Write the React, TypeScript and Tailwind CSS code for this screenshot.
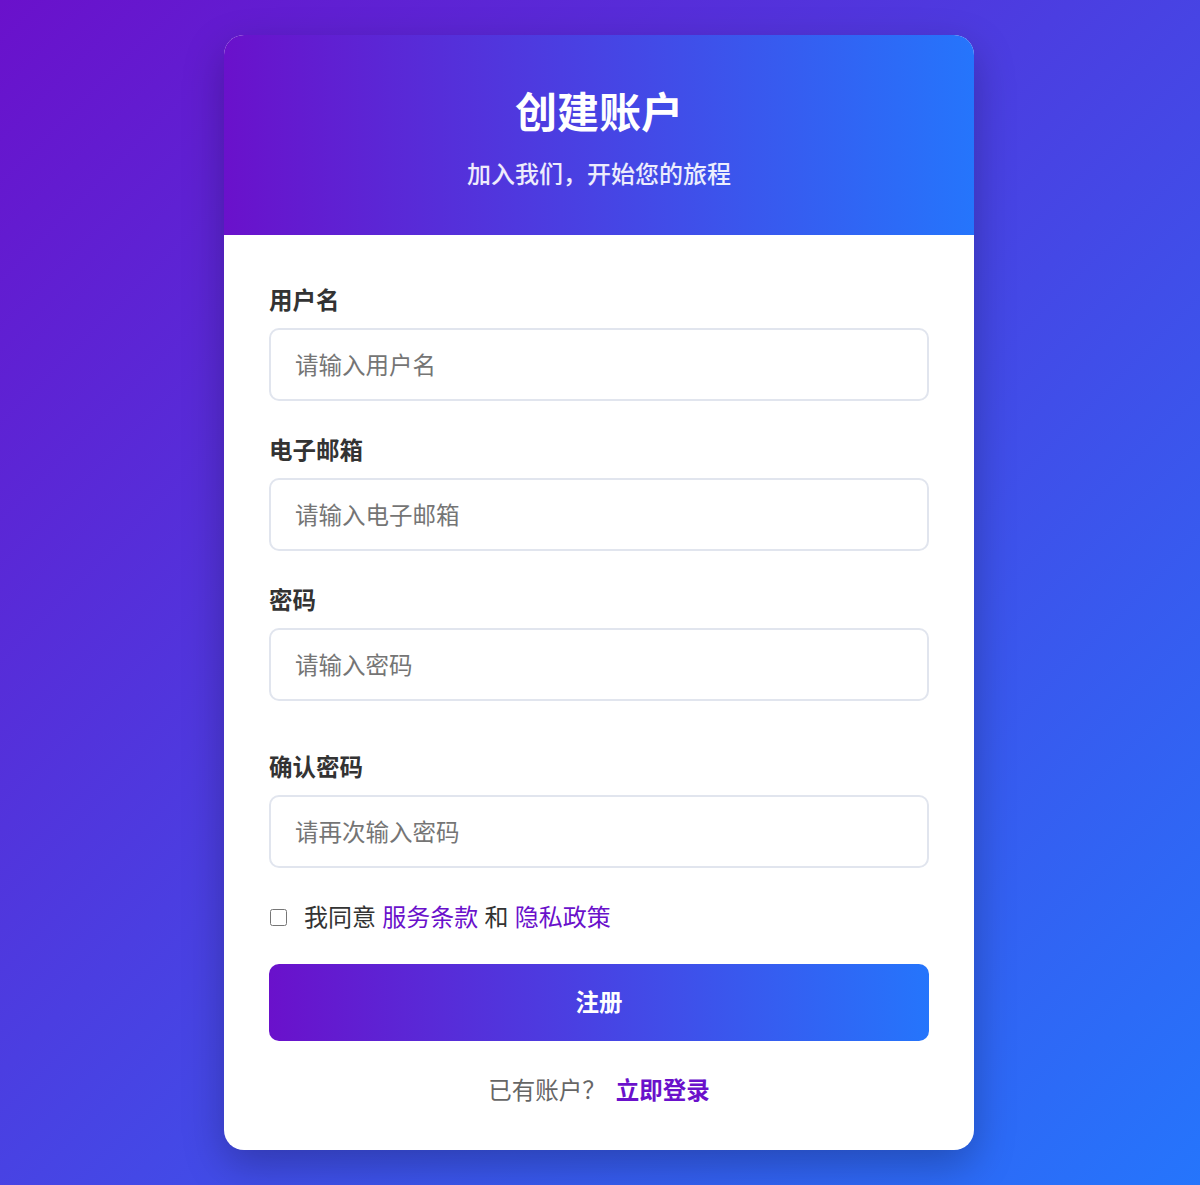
import React, { useState } from 'react';

const FIELDS = [
    { id: 'username', label: '用户名', placeholder: '请输入用户名', type: 'text' },
    { id: 'email', label: '电子邮箱', placeholder: '请输入电子邮箱', type: 'email' },
    { id: 'password', label: '密码', placeholder: '请输入密码', type: 'password' },
    { id: 'confirm', label: '确认密码', placeholder: '请再次输入密码', type: 'password' },
];

const App: React.FC = () => {
    const [agree, setAgree] = useState(false);

    return (
        <div
            className="min-h-screen w-full flex items-center justify-center pr-[2px] bg-[linear-gradient(135deg,#6a11cb_0%,#2575fc_100%)]"
            style={{ fontFamily: '"Noto Sans", "Noto Sans CJK SC", sans-serif' }}
        >
            <div className="w-[750px] bg-white rounded-[20px] overflow-hidden shadow-[0_15px_40px_rgba(0,0,0,0.25)]">
                {/* Header */}
                <div className="bg-[linear-gradient(90deg,#6a11cb_0%,#2575fc_100%)] text-center pt-[53px] pb-[45px]">
                    <h1 className="text-[42px] leading-[48px] font-bold text-white">创建账户</h1>
                    <p className="mt-[22px] text-[24px] leading-[32px] font-medium text-white/90">加入我们，开始您的旅程</p>
                </div>

                {/* Form */}
                <form className="px-[45px] pt-[49px] pb-[44px]" onSubmit={(e) => e.preventDefault()}>
                    {FIELDS.map((f, i) => (
                        <div key={f.id} className={i === 3 ? 'mt-[50px]' : i > 0 ? 'mt-[33px]' : ''}>
                            <label htmlFor={f.id} className="block text-[23.5px] leading-[32px] font-bold text-[#333] mb-[12px]">
                                {f.label}
                            </label>
                            <input
                                id={f.id}
                                type={f.type}
                                placeholder={f.placeholder}
                                className="w-full h-[73px] px-[24px] text-[23.5px] text-[#333] placeholder:text-[#757575] border-2 border-[#e1e5ee] rounded-[10px] outline-none focus:border-[#6a11cb]"
                            />
                        </div>
                    ))}

                    {/* Terms */}
                    <div className="mt-[33px] flex items-center h-[32px] text-[24px] text-[#333]">
                        <input
                            type="checkbox"
                            checked={agree}
                            onChange={() => setAgree(!agree)}
                            className="w-[17px] h-[17px] ml-[1px] mr-[17px]"
                        />
                        <span>
                            我同意 <a href="#" className="text-[#6a11cb]">服务条款</a> 和 <a href="#" className="text-[#6a11cb]">隐私政策</a>
                        </span>
                    </div>

                    <button
                        type="submit"
                        className="mt-[31px] w-full h-[77px] rounded-[10px] bg-[linear-gradient(90deg,#6a11cb_0%,#2575fc_100%)] text-white text-[23.5px] font-bold"
                    >
                        注册
                    </button>

                    <p className="mt-[33px] text-center text-[23.5px] leading-[32px] text-[#666]">
                        已有账户？ <a href="#" className="ml-[4px] text-[#6a11cb] font-bold">立即登录</a>
                    </p>
                </form>
            </div>
        </div>
    );
};

export default App;
